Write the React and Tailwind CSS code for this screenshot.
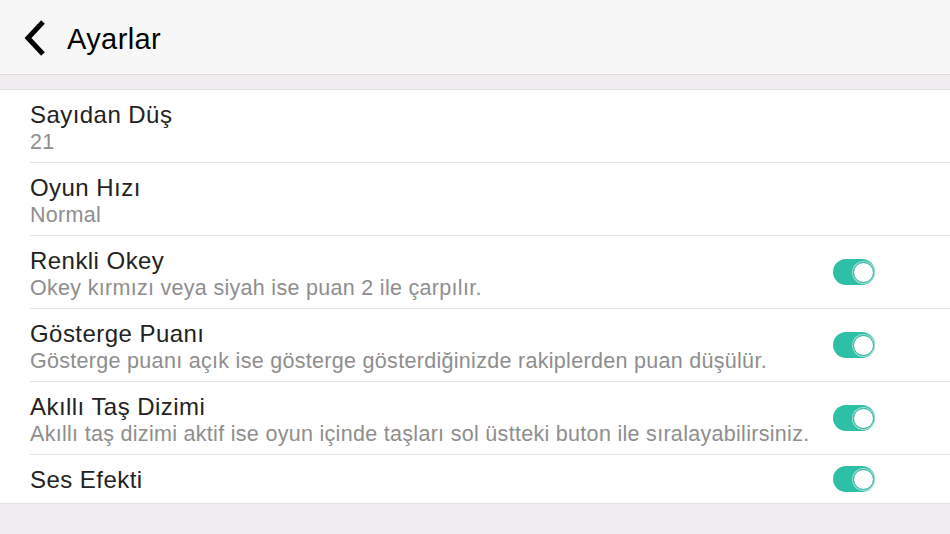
import { useState } from "react";

const ROWS = [
  { title: "Sayıdan Düş", sub: "21" },
  { title: "Oyun Hızı", sub: "Normal" },
  { title: "Renkli Okey", sub: "Okey kırmızı veya siyah ise puan 2 ile çarpılır.", toggle: true },
  { title: "Gösterge Puanı", sub: "Gösterge puanı açık ise gösterge gösterdiğinizde rakiplerden puan düşülür.", toggle: true },
  { title: "Akıllı Taş Dizimi", sub: "Akıllı taş dizimi aktif ise oyun içinde taşları sol üstteki buton ile sıralayabilirsiniz.", toggle: true },
  { title: "Ses Efekti", toggle: true },
];

function Toggle({ on, onClick }) {
  return (
    <button
      onClick={onClick}
      className={`relative w-[42px] h-[26px] rounded-full shrink-0 ${on ? "bg-[#2ebfa7]" : "bg-[#e5e5e5]"}`}
    >
      <span
        className={`absolute top-[2.5px] w-[21px] h-[21px] rounded-full bg-white border border-[#27a993] shadow-[0_0_0_1px_rgba(255,255,255,0.5)] ${on ? "left-[20px]" : "left-[1px]"}`}
      />
    </button>
  );
}

export default function App() {
  const [toggles, setToggles] = useState({ 2: true, 3: true, 4: true, 5: true });

  return (
    <div className="h-[534px] bg-[#efebee] font-['Liberation_Sans',Arial,sans-serif] overflow-hidden">
      {/* ust bar */}
      <div className="h-[75px] bg-[#f7f7f7] border-b border-[#dcdadb] flex items-center">
        <svg width="24" height="36" viewBox="0 0 24 36" className="ml-[23px] mt-[2px]">
          <path d="M20 2 L5 18 L20 34" fill="none" stroke="#000" strokeWidth="5" />
        </svg>
        <h1 className="ml-[20px] mt-[6px] text-[29px] font-medium text-black tracking-[0.4px]">Ayarlar</h1>
      </div>

      <div className="h-[14px]" />

      <div className="bg-white border-t border-b border-[#e3e1e2]">
        {ROWS.map((r, i) => (
          <div key={i} className="pl-[30px]">
            <div
              className={`flex items-center pr-[75px] ${r.sub ? "h-[73px]" : "h-[48px]"} ${i < ROWS.length - 1 ? "border-b border-[#e3e3e3]" : ""}`}
            >
              <div className={`flex-1 ${r.sub ? "pt-[4px]" : "pt-[1px]"}`}>
                <div className="text-[24px] leading-[28px] tracking-[0.45px] text-[#222]">{r.title}</div>
                {r.sub && (
                  <div className="mt-[1px] text-[21.5px] leading-[25px] tracking-[0.3px] text-[#8e8e8e]">{r.sub}</div>
                )}
              </div>
              {r.toggle && (
                <Toggle on={toggles[i]} onClick={() => setToggles({ ...toggles, [i]: !toggles[i] })} />
              )}
            </div>
          </div>
        ))}
      </div>
    </div>
  );
}
